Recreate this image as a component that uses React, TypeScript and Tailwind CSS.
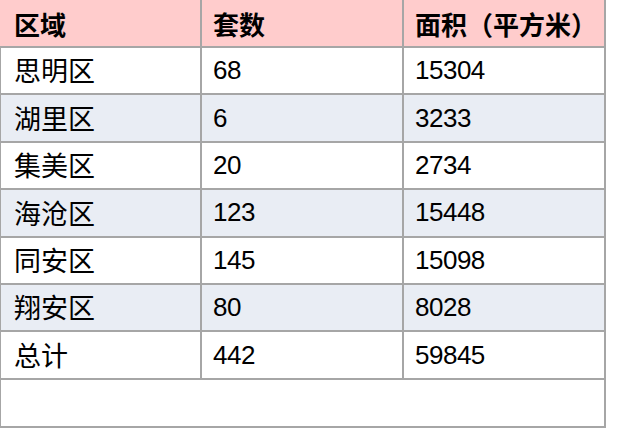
const rows = [
  { area: "思明区", count: "68", size: "15304" },
  { area: "湖里区", count: "6", size: "3233" },
  { area: "集美区", count: "20", size: "2734" },
  { area: "海沧区", count: "123", size: "15448" },
  { area: "同安区", count: "145", size: "15098" },
  { area: "翔安区", count: "80", size: "8028" },
  { area: "总计", count: "442", size: "59845" },
];

const cjk = { fontFamily: '"Noto Sans CJK SC", "Liberation Sans", sans-serif' };
const num = { fontFamily: '"Liberation Sans", "Noto Sans CJK SC", sans-serif' };

function App() {
  return (
    <div className="w-[625px] h-[429px] bg-white overflow-hidden">
      <div className="w-[606px]">
        <div className="grid grid-cols-[202px_202px_202px] h-[48px] bg-[#ffcccc] border-b-2 border-[#a6a6a6] text-black">
          {["区域", "套数", "面积（平方米）"].map((h, i) => (
            <div
              key={h}
              style={cjk}
              className={`flex items-center border-r-2 border-[#a6a6a6] font-bold text-[26px] whitespace-nowrap overflow-hidden ${i === 0 ? "pl-[14px]" : "pl-[11px]"}`}
            >
              {h}
            </div>
          ))}
        </div>
        {rows.map((r, idx) => (
          <div
            key={r.area}
            className={`grid grid-cols-[201px_202px_202px] h-[47.4px] border-l border-b-2 border-[#a6a6a6] text-black ${idx % 2 === 1 ? "bg-[#e9edf4]" : "bg-white"}`}
          >
            <div style={cjk} className="flex items-center pl-[13px] border-r-2 border-[#a6a6a6] text-[27px]">
              {r.area}
            </div>
            <div style={num} className="flex items-center pl-[11px] border-r-2 border-[#a6a6a6] text-[26px] tracking-[-0.5px]">
              {r.count}
            </div>
            <div style={num} className="flex items-center pl-[11px] border-r-2 border-[#a6a6a6] text-[26px] tracking-[-0.5px]">
              {r.size}
            </div>
          </div>
        ))}
        <div className="h-[48px] border-l border-r-2 border-b-2 border-[#a6a6a6] bg-white" />
      </div>
    </div>
  );
}

export default App;
